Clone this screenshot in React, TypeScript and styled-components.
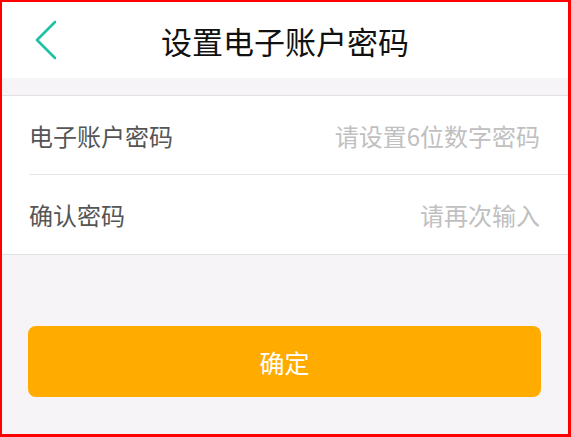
import { createGlobalStyle } from 'styled-components';
import styled from 'styled-components';

const GlobalStyle = createGlobalStyle`
  * {
    box-sizing: border-box;
  }
  body {
    margin: 0;
    font-family: 'Noto Sans CJK SC', 'Noto Sans', sans-serif;
  }
`;

const Frame = styled.div`
  width: 571px;
  height: 437px;
  display: flex;
  flex-direction: column;
  border-style: solid;
  border-color: #ff0000;
  border-width: 2px 3px 3px 2px;
  background-color: #f6f4f7;
`;

const Header = styled.header`
  height: 76px;
  flex-shrink: 0;
  display: grid;
  grid-template-columns: 1fr auto 1fr;
  align-items: center;
  background-color: #fff;
`;

const BackButton = styled.button`
  justify-self: start;
  display: flex;
  padding: 0 0 0 32px;
  border: none;
  background: none;
  cursor: pointer;
`;

const Title = styled.h1`
  margin: 0;
  font-size: 31px;
  font-weight: 400;
  color: #111;
  line-height: 1;
`;

const Spacer = styled.div`
  height: 17px;
  flex-shrink: 0;
`;

const FormGroup = styled.div`
  background-color: #fff;
  border-top: 1px solid #e2e0e3;
  border-bottom: 1px solid #e2e0e3;
`;

const Row = styled.label`
  height: 79px;
  margin-left: 27px;
  padding-right: 26px;
  display: flex;
  align-items: center;
  gap: 16px;

  &:not(:last-child) {
    border-bottom: 1px solid #e8e6e9;
  }
`;

const Label = styled.span`
  font-size: 24px;
  color: #555;
  white-space: nowrap;
`;

const Input = styled.input`
  flex: 1;
  min-width: 0;
  border: none;
  outline: none;
  background: none;
  text-align: right;
  font-family: inherit;
  font-size: 24px;
  color: #333;

  &::placeholder {
    color: #c0c0c0;
  }
`;

const SubmitButton = styled.button`
  margin: 71px 27px 0 26px;
  height: 71px;
  flex-shrink: 0;
  border: none;
  border-radius: 8px;
  background-color: #ffab00;
  color: #fff;
  font-family: inherit;
  font-size: 25px;
  cursor: pointer;
`;

const fields = [
  { label: '电子账户密码', placeholder: '请设置6位数字密码' },
  { label: '确认密码', placeholder: '请再次输入' },
];

const App = () => {
  return (
    <>
      <GlobalStyle />
      <Frame>
        <Header>
          <BackButton aria-label='返回'>
            <svg width='24' height='40' viewBox='0 0 24 40' fill='none'>
              <polyline
                points='21,2 3,20 21,38'
                stroke='#20c0a7'
                strokeWidth='2.6'
                strokeLinecap='round'
                strokeLinejoin='round'
              />
            </svg>
          </BackButton>
          <Title>设置电子账户密码</Title>
        </Header>

        <Spacer />

        <FormGroup>
          {fields.map((field) => (
            <Row key={field.label}>
              <Label>{field.label}</Label>
              <Input type='password' placeholder={field.placeholder} />
            </Row>
          ))}
        </FormGroup>

        <SubmitButton>确定</SubmitButton>
      </Frame>
    </>
  );
};

export default App;
